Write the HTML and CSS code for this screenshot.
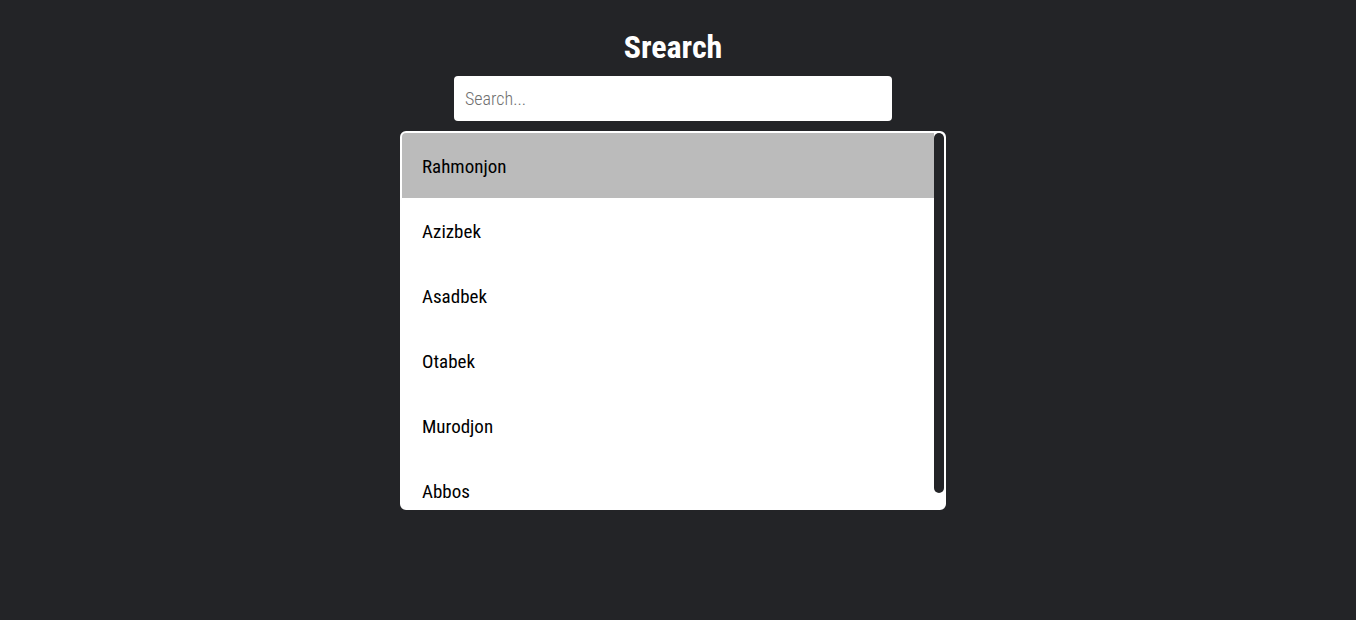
FILE: index.html
```html
<!DOCTYPE html>
<html lang="en">
<head>
<meta charset="utf-8">
<title>Srearch</title>
<link rel="stylesheet" href="styles.css">
</head>
<body>
<main class="page">
  <h1 class="title">Srearch</h1>
  <input class="search" type="text" placeholder="Search...">
  <div class="list">
    <ul class="items">
      <li class="item active">Rahmonjon</li>
      <li class="item">Azizbek</li>
      <li class="item">Asadbek</li>
      <li class="item">Otabek</li>
      <li class="item">Murodjon</li>
      <li class="item">Abbos</li>
    </ul>
    <div class="scrollbar"><div class="thumb"></div></div>
  </div>
</main>
</body>
</html>
```
FILE: styles.css
```css
* { box-sizing: border-box; }
html, body { margin: 0; padding: 0; }
body {
  background: #232427;
  font-family: "Roboto Condensed", "DejaVu Sans Condensed", sans-serif;
  height: 620px;
  overflow: hidden;
}
.page {
  display: flex;
  flex-direction: column;
  align-items: center;
  padding-top: 28px;
  padding-right: 10px;
}
.title {
  margin: 0;
  color: #fff;
  font-size: 32px;
  line-height: 38px;
  font-weight: 700;
}
.search {
  margin-top: 10px;
  width: 438px;
  height: 45px;
  border: none;
  border-radius: 4px;
  padding: 0 11px;
  font-family: inherit;
  font-size: 18px;
  color: #333;
  background: #fff;
  outline: none;
}
.search::placeholder { color: #6f6f6f; font-weight: 300; }
.list {
  margin-top: 10px;
  width: 546px;
  height: 379px;
  border: 2px solid #fff;
  border-radius: 6px;
  background: #fff;
  display: flex;
  overflow: hidden;
}
.items {
  list-style: none;
  margin: 0;
  padding: 0;
  flex: 1;
  overflow: hidden;
}
.item {
  height: 65px;
  display: flex;
  align-items: center;
  padding: 2px 0 0 20px;
  font-size: 19px;
  color: #000;
}
.item.active { background: #bbbbbb; }
.scrollbar {
  width: 10px;
  background: #fff;
}
.thumb {
  height: 360px;
  background: #232427;
  border-radius: 5px;
}
```
